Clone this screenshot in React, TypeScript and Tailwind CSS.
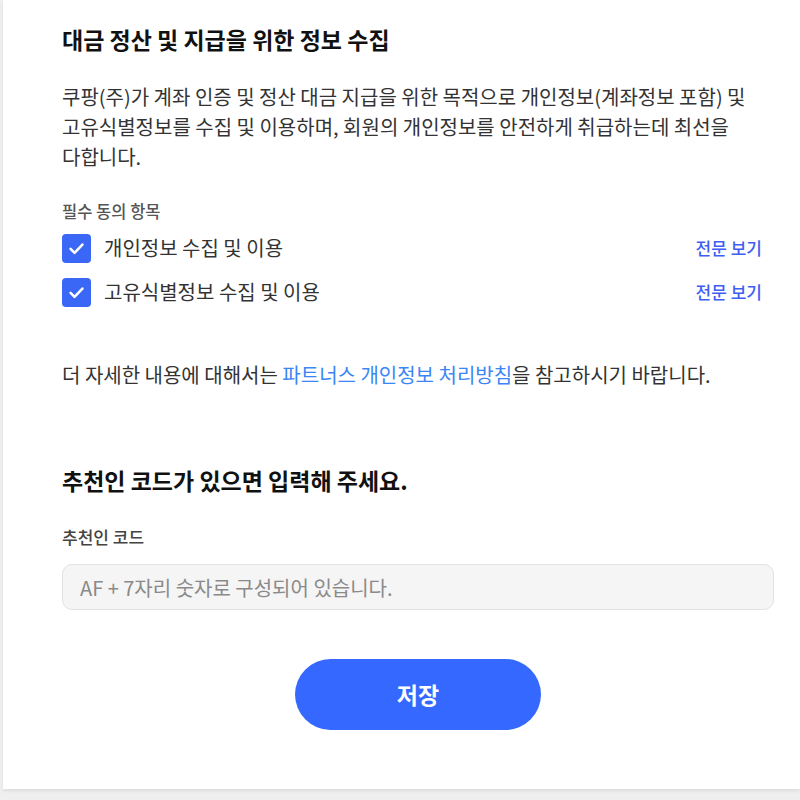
import { useState } from 'react'

const font = { fontFamily: '"Noto Sans CJK KR", "Noto Sans", sans-serif' }

const agreements = [
  { id: 'privacy', label: '개인정보 수집 및 이용' },
  { id: 'unique',  label: '고유식별정보 수집 및 이용' },
]

function CheckBox({ checked, onToggle }: { checked: boolean; onToggle: () => void }) {
  return (
    <button
      onClick={onToggle}
      className={[
        'flex h-[29px] w-[29px] shrink-0 items-center justify-center rounded-[4px]',
        checked ? 'bg-[#3a67f5]' : 'border border-[#ccc] bg-white',
      ].join(' ')}>
      {checked && (
        <svg width="19" height="19" viewBox="0 0 24 24" fill="none">
          <path d="M4.5 12.5l5 5L19.5 7" stroke="white" strokeWidth="3.2" strokeLinecap="round" strokeLinejoin="round" />
        </svg>
      )}
    </button>
  )
}

export default function App() {
  const [checked, setChecked] = useState<Record<string, boolean>>({ privacy: true, unique: true })
  const [code, setCode] = useState('')

  return (
    <div className="h-[800px] overflow-hidden bg-[#efefef] pl-[3px] break-keep" style={font}>
      <div className="bg-white pl-[59px] pr-[26px] pt-[24px] pb-[59px] shadow-[0_2px_3px_rgba(0,0,0,0.08)]">

        {/* 정보 수집 안내 */}
        <h1 className="text-[23px] font-bold leading-[30px] text-[#111]">대금 정산 및 지급을 위한 정보 수집</h1>
        <p className="mt-[28px] text-[20px] leading-[30px] text-[#333]">
          쿠팡(주)가 계좌 인증 및 정산 대금 지급을 위한 목적으로 개인정보(계좌정보 포함) 및
          고유식별정보를 수집 및 이용하며, 회원의 개인정보를 안전하게 취급하는데 최선을
          다합니다.
        </p>

        <p className="mt-[29px] text-[16.5px] font-medium leading-[20px] text-[#555]">필수 동의 항목</p>
        <div className="mt-[12px] flex flex-col gap-[14px]">
          {agreements.map(a => (
            <div key={a.id} className="flex h-[30px] items-center">
              <CheckBox
                checked={checked[a.id]}
                onToggle={() => setChecked(prev => ({ ...prev, [a.id]: !prev[a.id] }))}
              />
              <span className="ml-[13px] flex-1 text-[20px] text-[#333]">{a.label}</span>
              <a className="mr-[12px] text-[17px] font-medium text-[#3f5ef2]">전문 보기</a>
            </div>
          ))}
        </div>

        <p className="mt-[53px] text-[20px] leading-[30px] text-[#333]">
          더 자세한 내용에 대해서는 <a className="text-[#3b86f5]">파트너스 개인정보 처리방침</a>을 참고하시기 바랍니다.
        </p>

        {/* 추천인 코드 */}
        <h2 className="mt-[75px] text-[23px] font-bold leading-[30px] text-[#111]">추천인 코드가 있으면 입력해 주세요.</h2>
        <p className="mt-[32px] text-[17px] font-medium leading-[20px] text-[#444]">추천인 코드</p>
        <input
          value={code}
          onChange={e => setCode(e.target.value)}
          placeholder="AF + 7자리 숫자로 구성되어 있습니다."
          className="mt-[17px] block h-[46px] w-full rounded-[10px] border border-[#e2e2e2] bg-[#f5f5f5] px-[17px] text-[20px] text-[#333] outline-none placeholder:text-[#8a8a8a]"
        />

        <div className="mt-[49px] flex justify-center">
          <button className="h-[71px] w-[246px] rounded-full bg-[#3468ff] text-[23px] font-bold text-white">
            저장
          </button>
        </div>
      </div>
    </div>
  )
}
